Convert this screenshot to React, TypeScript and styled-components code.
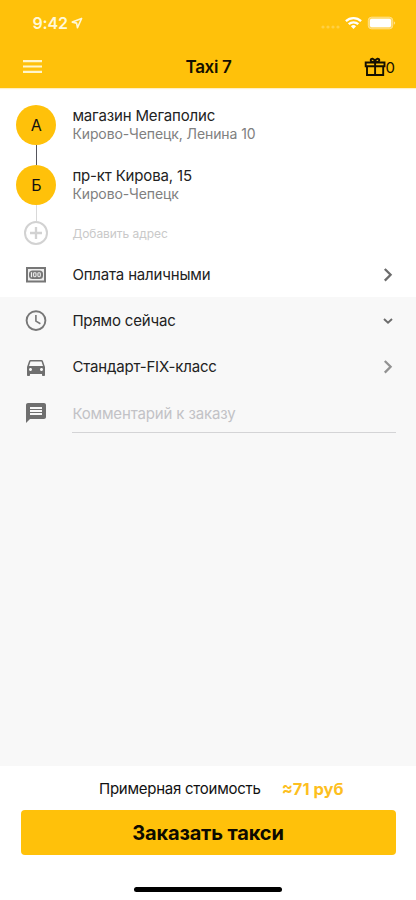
import React from "react";
import styled, { createGlobalStyle } from "styled-components";

const Global = createGlobalStyle`
  * { box-sizing: border-box; }
  body { margin: 0; background: #fff; font-family: Inter, "Liberation Sans", sans-serif; color: #222; }
  svg { display: block; flex: none; }
`;

const Screen = styled.div`
  display: flex;
  flex-direction: column;
  width: 416px;
  height: 900px;
  overflow: hidden;
  background: #fff;
`;

const Header = styled.header`
  height: 88px;
  flex: none;
  background: #ffc10a;
  box-shadow: 0 1px 1px rgba(255, 193, 10, 0.25);
`;

const StatusBar = styled.div`
  display: flex;
  align-items: center;
  height: 46px;
  padding: 0 20px 0 32.500px;
  color: #fff8d8;
`;

const Clock = styled.span`
  font-size: 16px;
  font-weight: 600;
  letter-spacing: -0.2px;
  margin-right: 3px;
`;

const StatusIcons = styled.div`
  display: flex;
  align-items: center;
  margin-left: auto;
`;

const NavBar = styled.div`
  display: grid;
  grid-template-columns: 1fr auto 1fr;
  align-items: center;
  height: 42px;
  padding: 0 21px 0 23px;
  color: #140f00;
`;

const Title = styled.h1`
  margin: 0 1px 0 0;
  font-size: 17px;
  font-weight: 600;
  letter-spacing: -0.35px;
`;

const Bonus = styled.div`
  display: flex;
  align-items: center;
  justify-content: flex-end;
  font-size: 15px;
`;

const Route = styled.section`
  display: flex;
  flex-direction: column;
  padding-top: 17px;
  height: 164px;
  flex: none;
`;

const Stop = styled.div<{ $height: number }>`
  display: flex;
  align-items: center;
  height: ${(p) => p.$height}px;
`;

const IconCell = styled.div`
  display: flex;
  justify-content: center;
  width: 40px;
  margin: 0 16px 0 16.4px;
  flex: none;
`;

const Badge = styled.div`
  display: flex;
  align-items: center;
  justify-content: center;
  width: 40px;
  height: 40px;
  border-radius: 50%;
  background: #ffc10a;
  color: #111;
  font-size: 16px;
`;

const Connector = styled.div<{ $height: number; $color: string }>`
  width: 1px;
  height: ${(p) => p.$height}px;
  margin-left: 36px;
  background: ${(p) => p.$color};
`;

const Place = styled.div`
  font-size: 15px;
  line-height: 18px;
  letter-spacing: -0.16px;
  color: #222;
`;

const Address = styled.div`
  font-size: 14px;
  line-height: 18px;
  letter-spacing: -0.1px;
  color: #808080;
`;

const AddLabel = styled.span`
  font-size: 12px;
  letter-spacing: -0.05px;
  color: #c9c9c9;
`;

const Options = styled.section`
  flex: 1;
  background: #f8f8f8;
`;

const OptionRow = styled.div<{ $height?: number }>`
  display: flex;
  align-items: center;
  height: ${(p) => p.$height ?? 46}px;
  flex: none;
  padding-right: 20px;
`;

const OptionLabel = styled.span`
  flex: 1;
  font-size: 15px;
  letter-spacing: -0.17px;
  color: #222;
`;

const Comment = styled.div`
  display: flex;
  align-items: center;
  flex: 1;
  height: 40px;
  padding-top: 2px;
  border-bottom: 1px solid #d4d4d6;
  font-size: 15px;
  letter-spacing: -0.15px;
  color: #c2c2c6;
`;

const Footer = styled.footer`
  display: flex;
  flex-direction: column;
  align-items: center;
  height: 134px;
  flex: none;
  background: #fff;
`;

const Estimate = styled.div`
  display: flex;
  align-items: center;
  width: 100%;
  height: 44px;
  padding-left: 99px;
  font-size: 15px;
  letter-spacing: -0.25px;
  color: #111;
`;

const Price = styled.strong`
  margin-left: 21px;
  padding-top: 1px;
  font-size: 16.500px;
  font-weight: 700;
  letter-spacing: 0;
  color: #fdbf1f;
`;

const OrderButton = styled.button`
  width: 375px;
  height: 45px;
  padding: 0;
  border: 0;
  border-radius: 4px;
  background: #ffc10a;
  color: #0d0a00;
  font: 700 20px Inter, "Liberation Sans", sans-serif;
  letter-spacing: -0.15px;
`;

const HomeIndicator = styled.div`
  width: 148px;
  height: 5px;
  margin-top: 32px;
  border-radius: 3px;
  background: #000;
`;

const Chevron = ({ color }: { color: string }) => (
  <svg width="16" height="16" viewBox="0 0 16 16" fill="none" stroke={color} strokeWidth="2.300">
    <path d="M4.800 2 10.600 7.800l-5.800 5.800" />
  </svg>
);

export default function App() {
  return (
    <>
      <Global />
      <Screen>
        <Header>
          <StatusBar>
            <Clock>9:42</Clock>
            <svg width="13" height="13" viewBox="0 0 13 13" fill="none" stroke="#fff8d8" strokeWidth="1.600" strokeLinejoin="round">
              <path d="M10.600 1.400 1.300 5.100l4.300 1 .9 4.700z" />
            </svg>
            <StatusIcons>
              <svg width="20" height="14" viewBox="0 0 20 14" fill="#ffd044">
                <circle cx="3" cy="11" r="1.600" />
                <circle cx="8" cy="11" r="1.600" />
                <circle cx="13" cy="11" r="1.600" />
                <circle cx="18" cy="11" r="1.600" />
              </svg>
              <svg width="26" height="14" viewBox="0 0 26 14" fill="none" stroke="#fff" strokeWidth="2.300">
                <path d="M5.900 5.200a11 11 0 0 1 15.200 0" />
                <path d="M8.700 8.200a7 7 0 0 1 9.600 0" />
                <path d="m13.500 13-2.600-2.700a3.800 3.800 0 0 1 5.200 0z" fill="#fff" stroke="none" />
              </svg>
              <svg width="30" height="14" viewBox="0 0 30 14">
                <rect x="2.300" y="1.200" width="24.400" height="11.600" rx="3.200" fill="#ffd65c" stroke="#ffe08a" />
                <rect x="3.900" y="2.800" width="21.200" height="8.400" rx="1.600" fill="#fff" />
                <path d="M27.800 5.200v3.600q1.400-.5 1.400-1.800t-1.400-1.800" fill="#ffe08a" />
              </svg>
            </StatusIcons>
          </StatusBar>
          <NavBar>
            <svg width="19" height="14" viewBox="0 0 19 14" fill="#fff6cc">
              <path d="M0 0h19v2.200H0zM0 5.400h19v2.200H0zM0 10.800h19V13H0z" />
            </svg>
            <Title>Taxi 7</Title>
            <Bonus>
              <svg width="22" height="20" viewBox="0 0 22 20" fill="none" stroke="#140f00" strokeWidth="1.900">
                <path d="M1.700 5.500h18.800v3.700H1.700zM3 9.200v8.800h16.200V9.200M11.100 5.500v12.500" />
                <path d="M10.600 5.300C7.800 5.300 6.700 4.400 6.700 3.200c0-2.200 3.600-2.200 4.300 1.500.7-3.700 4.300-3.700 4.300-1.500 0 1.200-1.100 2.100-3.900 2.100" />
              </svg>
              0
            </Bonus>
          </NavBar>
        </Header>

        <Route>
          <Stop $height={40}>
            <IconCell><Badge>А</Badge></IconCell>
            <div>
              <Place>магазин Мегаполис</Place>
              <Address>Кирово-Чепецк, Ленина 10</Address>
            </div>
          </Stop>
          <Connector $height={20} $color="#55555c" />
          <Stop $height={40}>
            <IconCell><Badge>Б</Badge></IconCell>
            <div>
              <Place>пр-кт Кирова, 15</Place>
              <Address>Кирово-Чепецк</Address>
            </div>
          </Stop>
          <Connector $height={16} $color="#d9d9d9" />
          <Stop $height={24}>
            <IconCell>
              <svg width="24" height="24" viewBox="0 0 24 24" fill="none" stroke="#d2d2d2" strokeWidth="2">
                <circle cx="12" cy="12" r="11" />
                <path d="M12 6v12M6 12h12" strokeWidth="2.300" />
              </svg>
            </IconCell>
            <AddLabel>Добавить адрес</AddLabel>
          </Stop>
        </Route>

        <OptionRow $height={45}>
          <IconCell>
            <svg width="20" height="16" viewBox="0 0 20 16">
              <rect x="1" y="1" width="18" height="13.500" fill="#eee" stroke="#777" strokeWidth="2" />
              <rect x="3" y="3.500" width="14" height="8.500" rx="3.500" fill="#777" />
              <path d="M5.500 5.200v5" stroke="#eee" strokeWidth="1.200" />
              <rect x="7.600" y="5.700" width="2.400" height="4" rx=".9" fill="none" stroke="#eee" strokeWidth="1.100" />
              <rect x="11.900" y="5.700" width="2.400" height="4" rx=".9" fill="none" stroke="#eee" strokeWidth="1.100" />
            </svg>
          </IconCell>
          <OptionLabel>Оплата наличными</OptionLabel>
          <Chevron color="#6c6c6c" />
        </OptionRow>

        <Options>
          <OptionRow $height={47}>
            <IconCell>
              <svg width="22" height="22" viewBox="0 0 22 22" fill="none" stroke="#777" strokeWidth="1.900">
                <circle cx="11" cy="10.600" r="9.400" />
                <path d="M10.900 5.100v6l4.500 2.700" strokeWidth="1.600" />
              </svg>
            </IconCell>
            <OptionLabel>Прямо сейчас</OptionLabel>
            <svg width="16" height="16" viewBox="0 0 16 16" fill="none" stroke="#6c6c6c" strokeWidth="1.900">
              <path d="m4 6 4 3.800L12 6" />
            </svg>
          </OptionRow>
          <OptionRow $height={45}>
            <IconCell>
              <svg width="24" height="24" viewBox="0 0 24 24" fill="#6f6f6f">
                <path d="M18.920 6.010C18.720 5.420 18.160 5 17.500 5h-11c-.66 0-1.210.42-1.420 1.010L3 12v8c0 .55.45 1 1 1h1c.55 0 1-.45 1-1v-1h12v1c0 .55.45 1 1 1h1c.55 0 1-.45 1-1v-8l-2.080-5.990zM6.500 16c-.83 0-1.500-.67-1.500-1.500S5.670 13 6.500 13s1.500.67 1.500 1.500S7.330 16 6.500 16zm11 0c-.83 0-1.500-.67-1.500-1.500s.67-1.500 1.500-1.500 1.500.67 1.500 1.500-.67 1.500-1.500 1.500zM5 11l1.500-4.500h11L19 11H5z" />
              </svg>
            </IconCell>
            <OptionLabel>Стандарт-FIX-класс</OptionLabel>
            <Chevron color="#929292" />
          </OptionRow>
          <OptionRow $height={47}>
            <IconCell>
              <svg width="24" height="24" viewBox="0 0 24 24" fill="#6f6f6f">
                <path d="M20 2H4c-1.100 0-1.990.9-1.990 2L2 22l4-4h14c1.100 0 2-.9 2-2V4c0-1.100-.9-2-2-2zM6 9h12v2H6V9zm12 5H6v-2h12v2zm0-6H6V6h12v2z" />
              </svg>
            </IconCell>
            <Comment>Комментарий к заказу</Comment>
          </OptionRow>
        </Options>

        <Footer>
          <Estimate>
            Примерная стоимость
            <Price>≈71 руб</Price>
          </Estimate>
          <OrderButton>Заказать такси</OrderButton>
          <HomeIndicator />
        </Footer>
      </Screen>
    </>
  );
}
